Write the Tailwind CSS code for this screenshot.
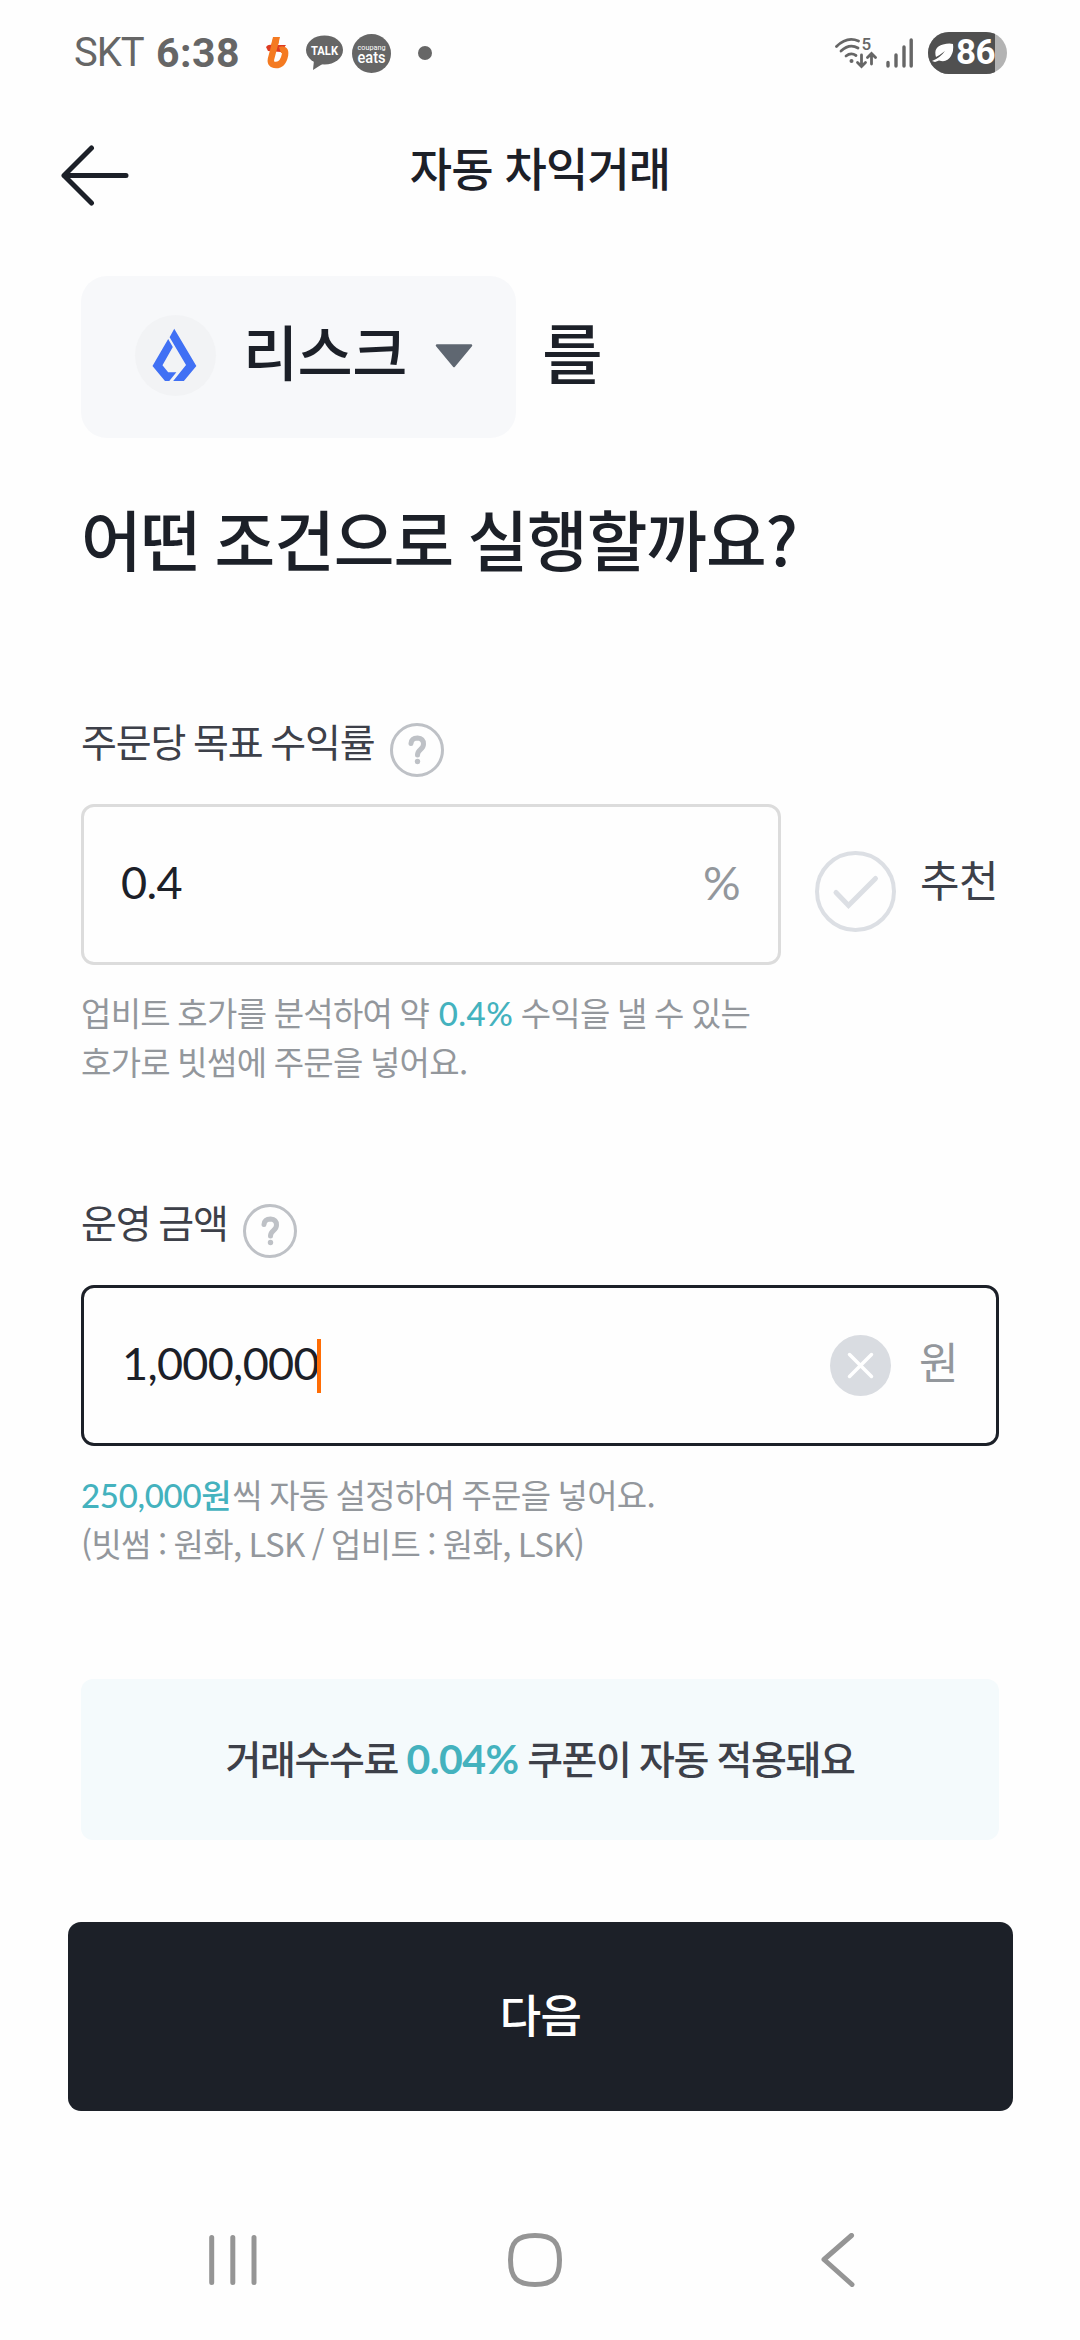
<!DOCTYPE html>
<html lang="ko">
<head>
<meta charset="utf-8">
<title>자동 차익거래</title>
<script src="https://cdn.jsdelivr.net/npm/@tailwindcss/browser@4"></script>
</head>
<body class="w-[1080px] h-[2340px] overflow-hidden bg-[#fefefe] flex flex-col font-['Noto_Sans_CJK_KR',sans-serif] tracking-[-0.6px] text-[#1c2028] whitespace-nowrap">

  <!-- Status bar -->
  <div class="h-[106px] shrink-0 flex items-center justify-between pl-[74px] pr-[73px] text-[#666] font-['Roboto',sans-serif] tracking-normal">
    <div class="flex items-center">
      <span class="w-[82px] text-[40px] leading-[40px] font-normal tracking-[-1px]">SKT</span>
      <span class="w-[110px] text-[41px] leading-[40px] font-bold tracking-[0.5px]">6:38</span>
      <svg class="w-[24px] h-[32px]" viewBox="0 0 24 32" fill="none">
        <path d="M0 10 Q2 7 6 8 L20 8 L15 15 L2 14 Z" fill="#dd3a22"/>
        <path d="M10 3 L5 22 Q4 28 10 28 Q17 28 19 18 Q20 11 14 13" stroke="#f47a21" stroke-width="6.500" stroke-linejoin="round"/>
        <path d="M7 0 H14 L12 8 H5 Z" fill="#f47a21"/>
      </svg>
      <svg class="w-[37px] h-[36px] ml-[16px]" viewBox="0 0 37 36">
        <ellipse cx="18.500" cy="15" rx="18.500" ry="14.500" fill="#666"/>
        <path d="M8 25 L7 35 L18 28 Z" fill="#666"/>
        <text x="18.500" y="20" text-anchor="middle" font-family="Roboto" font-weight="700" font-size="13.500" textLength="27" lengthAdjust="spacingAndGlyphs" fill="#fff">TALK</text>
      </svg>
      <svg class="w-[39px] h-[39px] ml-[9px]" viewBox="0 0 39 39">
        <circle cx="19.500" cy="19.500" r="19.500" fill="#666"/>
        <text x="19.500" y="15.500" text-anchor="middle" font-family="Roboto" font-size="8" textLength="28" lengthAdjust="spacingAndGlyphs" fill="#fff">coupang</text>
        <text x="19.500" y="29" text-anchor="middle" font-family="Roboto" font-weight="500" font-size="16" textLength="28" lengthAdjust="spacingAndGlyphs" fill="#fff">eats</text>
      </svg>
      <span class="w-[14px] h-[14px] ml-[27px] rounded-full bg-[#666]"></span>
    </div>
    <div class="flex items-center">
      <svg class="w-[42px] h-[42px]" viewBox="0 -5 42 42" fill="none" stroke="#666" stroke-width="2.800" stroke-linecap="round">
        <path d="M1.500 9.500 Q12 -1 23.500 4"/>
        <path d="M6 14 Q14.500 6 23 11"/>
        <path d="M11 19 Q16 15 21 18.500"/>
        <circle cx="16.500" cy="24" r="2" fill="#666" stroke="none"/>
        <path d="M26.500 18 V29 M22.500 25.500 L26.500 29.500 L30.500 25.500"/>
        <path d="M36.500 27 V17 M32.500 20.500 L36.500 16.500 L40.500 20.500"/>
        <text x="26.500" y="13" font-family="Roboto" font-weight="500" font-size="17" fill="#666" stroke="none">5</text>
      </svg>
      <svg class="w-[27px] h-[30px] ml-[9px]" viewBox="0 0 27 30" stroke="#666" stroke-width="3.400" stroke-linecap="round">
        <path d="M2 24.500 V28 M10 17 V28 M18 9 V28 M25.200 2 V28"/>
      </svg>
      <div class="w-[79px] h-[42px] ml-[15px] rounded-full overflow-hidden bg-[#b3b3b3] flex">
        <div class="w-[67px] h-[42px] bg-[#505050] flex items-center">
          <svg class="w-[22px] h-[20px] ml-[4px] shrink-0" viewBox="0 0 22 20">
            <path d="M4 14 Q1 4 11 1.500 Q17 0 21 1 Q22 8 19 13 Q15 20 7 17.500 L3 19 L0 18 Q8 15 13 8 Q8 12 4 14 Z" fill="#fff"/>
          </svg>
          <span class="ml-[2px] text-white text-[35px] leading-[42px] font-bold tracking-[-0.5px]">86</span>
        </div>
      </div>
    </div>
  </div>

  <!-- Header -->
  <header class="h-[170px] shrink-0 flex items-start px-[60px] pt-[30px]">
    <svg class="w-[70px] h-[62px] mt-[9px]" viewBox="0 0 70 62" fill="none" stroke="#1c2028" stroke-width="5" stroke-linecap="round" stroke-linejoin="round">
      <path d="M66 30.500 H4 M31.500 3 L4 30.500 L31.500 58"/>
    </svg>
    <h1 class="flex-1 text-center text-[46px] leading-[61px] font-medium tracking-[-0.9px]">자동 차익거래</h1>
    <div class="w-[70px]"></div>
  </header>

  <main class="px-[81px] flex flex-col">
    <!-- Coin selector -->
    <div class="flex items-center gap-[26px] h-[162px]">
      <button class="w-[435px] h-[162px] rounded-[26px] bg-[#f7f8fa] flex items-center pl-[54px] pb-[3px]">
        <svg class="w-[81px] h-[81px] rounded-full bg-[#f2f3f5]" viewBox="185 150 227 243" preserveAspectRatio="none" fill="#4070f4">
          <path d="M295 191 L357 303 L322 348 H292 L328 300 L282 217 Z"/>
          <path d="M278 222 L291 246 L262 301 L278 322 H301 L281 348 H269 L234 303 Z"/>
        </svg>
        <span class="ml-[27px] pb-[11px] text-[60px] leading-[72px] font-medium">리스크</span>
        <svg class="ml-[28px] w-[38px] h-[24px]" viewBox="0 0 38 24"><path d="M2 1.500 H36 L19 22 Z" fill="#5f6771" stroke="#5f6771" stroke-width="2.500" stroke-linejoin="round"/></svg>
      </button>
      <span class="pb-[15px] text-[66px] leading-[80px] font-medium">를</span>
    </div>
    <h2 class="mt-[59px] text-[66px] leading-[80px] font-medium tracking-[-1.1px] [word-spacing:-3px]">어떤 조건으로 실행할까요?</h2>

    <!-- Target return -->
    <div class="mt-[146px] h-[54px] flex items-center gap-[16px]">
      <span class="pb-[21px] text-[39px] leading-[54px] text-[#3d4049] tracking-[-1.1px] [word-spacing:-2.2px]">주문당 목표 수익률</span>
      <svg class="w-[54px] h-[54px]" viewBox="0 0 54 54" fill="none" stroke="#bec1c6">
        <circle cx="27" cy="27" r="25.500" stroke-width="3"/>
        <path d="M21 20.500 Q21.500 15 27.500 15 Q33.500 15.500 33.500 21 Q33.500 24 30.500 26.500 Q27.500 29 27.500 32" stroke-width="5" stroke-linecap="round"/>
        <circle cx="27.500" cy="38.500" r="2.700" fill="#bec1c6" stroke="none"/>
      </svg>
    </div>
    <div class="mt-[27px] h-[161px] flex items-center">
      <div class="w-[700px] h-[161px] shrink-0 border-[3px] border-[#dcdcdc] rounded-[13px] flex items-center justify-between pl-[37px] pr-[38px] font-['Lato',sans-serif] text-[45px] leading-[60px]">
        <span class="pb-[5px]">0.4</span>
        <span class="pb-[5px] text-[47px] text-[#93979c]">%</span>
      </div>
      <svg class="ml-[34px] mt-[14px] w-[81px] h-[81px] shrink-0" viewBox="0 0 81 81" fill="none" stroke="#dcdfe4">
        <circle cx="40.500" cy="40.500" r="38.500" stroke-width="4"/>
        <path d="M21 41.500 L33.500 54.500 L60.500 27.500" stroke-width="5" stroke-linecap="round"/>
      </svg>
      <span class="ml-[24px] pb-[13px] text-[43px] leading-[60px] text-[#3d4049]">추천</span>
    </div>
    <p class="mt-[23px] text-[33px] leading-[49px] text-[#93979c] tracking-[-0.7px] [word-spacing:-1.2px]">업비트 호가를 분석하여 약 <span class="ml-[2px] font-['Lato','Noto_Sans_CJK_KR',sans-serif] font-medium leading-[0] tracking-[0.5px] text-[#44b2be]">0.4%</span> 수익을 낼 수 있는<br>호가로 빗썸에 주문을 넣어요.</p>

    <!-- Operating amount -->
    <div class="mt-[118px] h-[54px] flex items-center gap-[15px]">
      <span class="pb-[21px] text-[39px] leading-[54px] text-[#3d4049] tracking-[-1.1px] [word-spacing:-2.2px]">운영 금액</span>
      <svg class="w-[54px] h-[54px]" viewBox="0 0 54 54" fill="none" stroke="#bec1c6">
        <circle cx="27" cy="27" r="25.500" stroke-width="3"/>
        <path d="M21 20.500 Q21.500 15 27.500 15 Q33.500 15.500 33.500 21 Q33.500 24 30.500 26.500 Q27.500 29 27.500 32" stroke-width="5" stroke-linecap="round"/>
        <circle cx="27.500" cy="38.500" r="2.700" fill="#bec1c6" stroke="none"/>
      </svg>
    </div>
    <div class="mt-[27px] h-[161px] border-[3px] border-[#1c2028] rounded-[13px] flex items-center pl-[38px] pr-[39px] text-[45px] leading-[60px]">
      <span class="pb-[5px] font-['Lato',sans-serif] tracking-[-0.7px]">1,000,000</span>
      <span class="w-[4px] h-[54px] -ml-[2px] bg-[#ff6d05]"></span>
      <svg class="ml-auto w-[61px] h-[61px]" viewBox="0 0 61 61">
        <circle cx="30.500" cy="30.500" r="30.500" fill="#d9dce1"/>
        <path d="M19.500 19.500 L41.500 41.500 M41.500 19.500 L19.500 41.500" stroke="#fff" stroke-width="3.500" stroke-linecap="round"/>
      </svg>
      <span class="ml-[28px] pb-[11px] text-[43px] text-[#93979c] -mr-[1px]">원</span>
    </div>
    <p class="mt-[24px] text-[33px] leading-[49px] text-[#93979c] tracking-[-0.7px] [word-spacing:-1.4px]"><span class="mr-[1px] font-['Lato','Noto_Sans_CJK_KR',sans-serif] font-medium leading-[0] tracking-[-0.3px] text-[#44b2be]">250,000원</span>씩 자동 설정하여 주문을 넣어요.<br>(빗썸 : 원화, LSK / 업비트 : 원화, LSK)</p>

    <!-- Coupon notice -->
    <div class="mt-[111px] h-[161px] rounded-[12px] bg-[#f4fafc] flex items-center justify-center pb-[6px]">
      <p class="text-[39px] leading-[60px] font-medium text-[#3d4049] tracking-[-1.4px] [word-spacing:-1px]">거래수수료 <span class="font-['Lato',sans-serif] text-[41px] font-bold leading-[0] tracking-[-0.5px] text-[#44b2be]">0.04%</span> 쿠폰이 자동 적용돼요</p>
    </div>
    <button class="mt-[82px] -ml-[13px] -mr-[14px] h-[189px] rounded-[13px] bg-[#1c2028] text-white text-[45px] leading-[60px] font-medium pb-[5px]">다음</button>
  </main>

  <!-- Navigation bar -->
  <nav class="mt-[122px] h-[54px] flex items-center px-[207px] text-[#959595]">
    <svg class="w-[51px] h-[54px]" viewBox="0 0 51 54" stroke="currentColor" stroke-width="5" stroke-linecap="round"><path d="M4.700 4.500 V49.500 M25.800 4.500 V49.500 M47 4.500 V49.500"/></svg>
    <svg class="ml-[250px] w-[54px] h-[54px]" viewBox="0 0 54 54" fill="none" stroke="currentColor" stroke-width="5"><path d="M27 2.500 C45 2.500 51.500 9 51.500 27 C51.500 45 45 51.500 27 51.500 C9 51.500 2.500 45 2.500 27 C2.500 9 9 2.500 27 2.500 Z"/></svg>
    <svg class="ml-[259px] w-[34px] h-[54px]" viewBox="0 0 34 54" fill="none" stroke="currentColor" stroke-width="5" stroke-linecap="round" stroke-linejoin="round"><path d="M30.500 2.500 L3 26.500 L31 51.500"/></svg>
  </nav>
</body>
</html>
